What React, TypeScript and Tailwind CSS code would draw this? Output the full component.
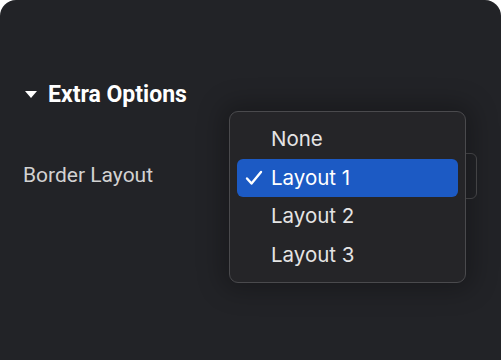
import React from 'react';

const options = ['None', 'Layout 1', 'Layout 2', 'Layout 3'];

function Menu({ selected }: { selected: string }) {
    return (
        <div className="absolute left-[229px] top-[111px] w-[237px] rounded-[9px] border border-[#4a4a4d] bg-[#252528] py-[8px] px-[7px] shadow-[0_0_24px_8px_rgba(0,0,0,0.25)]">
            {options.map((opt) => {
                const active = opt === selected;
                return (
                    <div
                        key={opt}
                        className={`flex h-[38.5px] items-center rounded-[6px] ${active ? 'bg-[#1c5ac4] text-white' : 'text-[#e4e4e4]'}`}
                    >
                        <span className="flex w-[34px] justify-center">
                            {active && (
                                <svg width="18" height="16" viewBox="0 0 18 16" fill="none">
                                    <path d="M2 8.5 L6.5 13.5 L16 2" stroke="white" strokeWidth="2.4" strokeLinecap="round" strokeLinejoin="round" />
                                </svg>
                            )}
                        </span>
                        <span className="text-[20.5px] leading-none" style={{ fontFamily: 'Inter, sans-serif' }}>{opt}</span>
                    </div>
                );
            })}
        </div>
    );
}

export default function App() {
    return (
        <div className="h-[360px] w-[501px] bg-white">
            <div className="relative h-full w-full rounded-t-[16px] bg-[#222327]" style={{ fontFamily: 'Roboto, sans-serif' }}>
                <div className="flex flex-col px-[23px] pt-[82px]">
                    {/* Section header */}
                    <div className="flex h-[26px] items-center gap-[11px] pl-[2px]">
                        <svg width="12" height="8" viewBox="0 0 12 8">
                            <path d="M0 0 H12 L6 7 Z" fill="white" />
                        </svg>
                        <span className="text-[23px] font-bold text-white">Extra Options</span>
                    </div>

                    {/* Row */}
                    <div className="mt-[45px] flex h-[46px] items-center justify-between">
                        <span className="text-[21px] text-[#d2d2d2]">Border Layout</span>
                        <div className="relative mr-[1px] h-[46px] w-[245px] rounded-[6px] border border-[#4b4b4e]">
                            <span className="absolute right-[10px] top-[20px] h-[2px] w-[2px] rounded-full bg-[#888]" />
                        </div>
                    </div>
                </div>

                <Menu selected="Layout 1" />
            </div>
        </div>
    );
}
